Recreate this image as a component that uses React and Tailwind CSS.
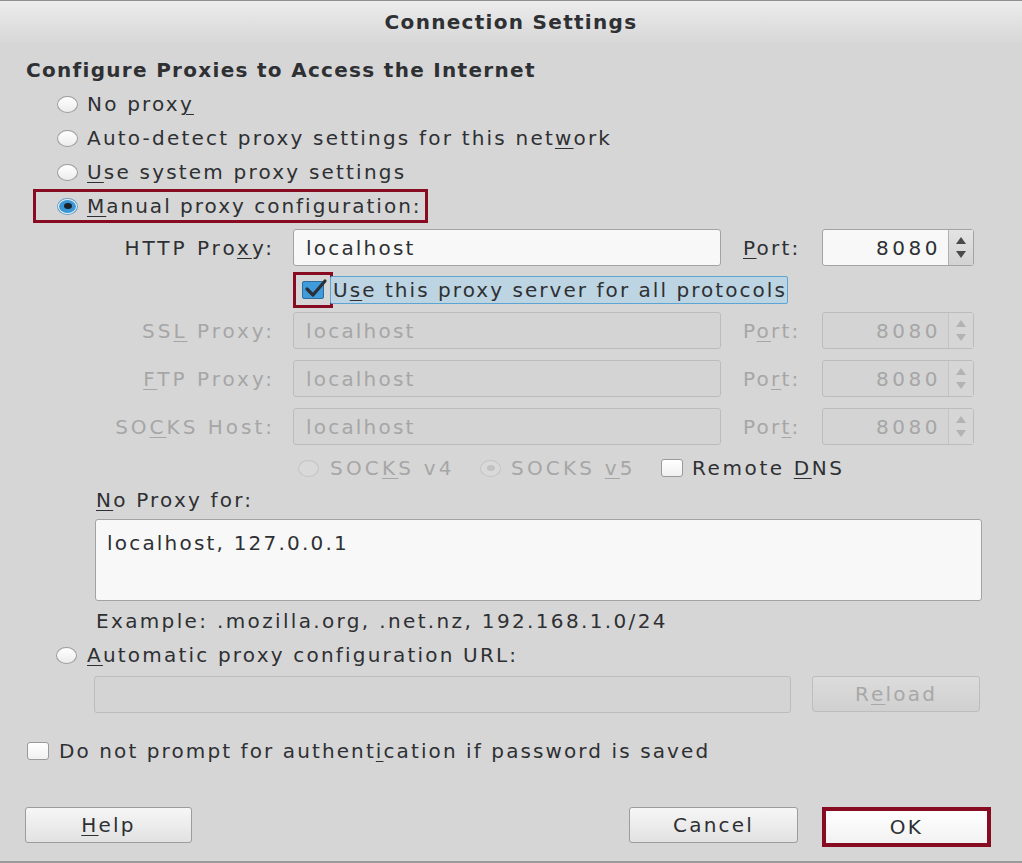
import React from "react";

const U = ({ children }) => (
  <span className="underline decoration-1 underline-offset-[3px]">{children}</span>
);

function Radio({ checked = false, disabled = false, dot = false }) {
  if (checked) {
    return (
      <div className="w-[21px] h-[17px] rounded-[50%] bg-[#e9f3fa] border border-[#6a9ec3] flex items-center justify-center shrink-0">
        <div className="w-[17px] h-[13px] rounded-[50%] bg-[#3a97d6] flex items-center justify-center">
          <div className="w-[8px] h-[6px] rounded-[50%] bg-[#1b2229]" />
        </div>
      </div>
    );
  }
  return (
    <div
      className={
        "w-[21px] h-[17px] rounded-[50%] border shrink-0 flex items-center justify-center " +
        (disabled
          ? "border-[#c4c4c4] bg-[#d9d9d9]"
          : "border-[#9d9d9d] bg-linear-to-b from-[#ffffff] to-[#ececec]")
      }
    >
      {dot && <div className="w-[8px] h-[6px] rounded-[50%] bg-[#c2c2c2]" />}
    </div>
  );
}

function Checkbox({ checked = false }) {
  if (checked) {
    return (
      <div className="relative w-[22px] h-[18px] rounded-[2px] bg-[#3f9bd9] border border-[#2b6e9c] shrink-0">
        <svg
          className="absolute left-[1px] -top-[4px]"
          width="24"
          height="22"
          viewBox="0 0 24 22"
        >
          <path
            d="M3 11 L9 17 L21 3"
            fill="none"
            stroke="#2a3036"
            strokeWidth="3.2"
            strokeLinecap="round"
            strokeLinejoin="round"
          />
        </svg>
      </div>
    );
  }
  return (
    <div className="w-[22px] h-[18px] rounded-[3px] border border-[#9a9a9a] bg-linear-to-b from-[#ffffff] to-[#f0f0f0] shrink-0" />
  );
}

function TextBox({ value, disabled = false, className = "" }) {
  return (
    <div
      className={
        "h-[37px] rounded-[3px] border flex items-center pl-[12px] whitespace-nowrap " +
        (disabled
          ? "bg-[#d4d4d4] border-[#bcbcbc] text-[#a6a6a6]"
          : "bg-[#f8f8f8] border-[#a3a3a3] text-[#2e3033]") +
        " " +
        className
      }
    >
      {value}
    </div>
  );
}

function Spin({ disabled = false }) {
  const c = disabled ? "#b3b3b3" : "#4a4a4a";
  return (
    <div
      className={
        "w-[152px] h-[37px] rounded-[3px] border flex " +
        (disabled ? "border-[#bcbcbc] bg-[#d4d4d4]" : "border-[#a3a3a3] bg-[#f8f8f8]")
      }
    >
      <div
        className={
          "flex-1 flex items-center justify-end pr-[7px] tracking-[3.5px] " +
          (disabled ? "text-[#a6a6a6]" : "text-[#2e3033]")
        }
      >
        8080
      </div>
      <div
        className={
          "w-[25px] border-l flex flex-col items-center justify-center gap-[7px] " +
          (disabled
            ? "border-[#c4c4c4] bg-[#d6d6d6]"
            : "border-[#b0b0b0] bg-linear-to-b from-[#e4e4e4] to-[#d2d2d2]")
        }
      >
        <svg width="10" height="7" viewBox="0 0 10 7">
          <path d="M5 0 L10 7 L0 7 Z" fill={c} />
        </svg>
        <svg width="10" height="7" viewBox="0 0 10 7">
          <path d="M0 0 L10 0 L5 7 Z" fill={c} />
        </svg>
      </div>
    </div>
  );
}

function ProxyRow({ label, disabled, portLabel, className = "" }) {
  return (
    <div className={"flex items-center h-[37px] " + className}>
      <div
        className={
          "w-[275px] -ml-[26px] whitespace-nowrap text-right -mr-[3px] shrink-0 tracking-[3px] " +
          (disabled ? "text-[#a6a6a6]" : "text-[#2e3033]")
        }
      >
        {label}
      </div>
      <TextBox value="localhost" disabled={disabled} className="ml-[21px] w-[428px] shrink-0" />
      <div
        className={
          "ml-[22px] w-[79px] whitespace-nowrap shrink-0 " +
          (disabled ? "text-[#a6a6a6]" : "text-[#2e3033]")
        }
      >
        {portLabel}
      </div>
      <Spin disabled={disabled} />
    </div>
  );
}

function Button({ children, className = "", disabled = false }) {
  return (
    <div
      className={
        "h-[36px] rounded-[3px] border flex items-center justify-center " +
        (disabled
          ? "border-[#bdbdbd] bg-linear-to-b from-[#dcdcdc] to-[#d0d0d0] text-[#a8a8a8]"
          : "border-[#9c9c9c] bg-linear-to-b from-[#f6f6f6] to-[#e2e2e2] text-[#2e3033]") +
        " " +
        className
      }
    >
      {children}
    </div>
  );
}

export default function App() {
  return (
    <div className="w-[1022px] h-[863px] bg-[#d6d6d6] border-t border-[#8f8f8f] flex flex-col font-['DejaVu_Sans',sans-serif] text-[20px] tracking-[2.2px] text-[#2e3033] overflow-hidden">
      <div className="h-[42px] shrink-0 bg-linear-to-b from-[#ececec] to-[#d7d7d7] flex items-center justify-center font-bold tracking-[1.3px]">
        Connection Settings
      </div>

      <div className="flex flex-col pl-[26px] pt-[10px]">
        <div className="h-[34px] flex items-center font-bold tracking-[1.3px]">
          Configure Proxies to Access the Internet
        </div>

        <div className="h-[34px] flex items-center pl-[31px] gap-[9px]">
          <Radio />
          <span>
            No prox<U>y</U>
          </span>
        </div>
        <div className="h-[34px] flex items-center pl-[31px] gap-[9px]">
          <Radio />
          <span>
            Auto-detect proxy settings for this net<U>w</U>ork
          </span>
        </div>
        <div className="h-[34px] flex items-center pl-[31px] gap-[9px]">
          <Radio />
          <span>
            <U>U</U>se system proxy settings
          </span>
        </div>
        <div className="ml-[7px] w-[395px] h-[34px] border-[3px] border-[#870b21] flex items-center pl-[21px] gap-[9px] whitespace-nowrap">
          <Radio checked />
          <span className="tracking-[2px]">
            <U>M</U>anual proxy configuration:
          </span>
        </div>

        <ProxyRow
          className="mt-[6px]"
          label={
            <>
              HTTP Pro<U>x</U>y:
            </>
          }
          portLabel={
            <>
              <U>P</U>ort:
            </>
          }
        />

        <div className="mt-[6px] h-[36px] flex items-center pl-[267px]">
          <div className="w-[40px] h-[36px] border-[3px] border-[#870b21] flex items-center justify-center shrink-0">
            <Checkbox checked />
          </div>
          <div className="-ml-[3px] h-[28px] w-[458px] flex items-center pl-[2px] bg-[#bdd4e2] border border-[#5ea4d3] rounded-[2px] whitespace-nowrap tracking-[2.05px]">
            U<U>s</U>e this proxy server for all protocols
          </div>
        </div>

        <ProxyRow
          className="mt-[4px]"
          disabled
          label={
            <>
              SS<U>L</U> Proxy:
            </>
          }
          portLabel={
            <>
              P<U>o</U>rt:
            </>
          }
        />
        <ProxyRow
          className="mt-[11px]"
          disabled
          label={
            <>
              <U>F</U>TP Proxy:
            </>
          }
          portLabel={
            <>
              Po<U>r</U>t:
            </>
          }
        />
        <ProxyRow
          className="mt-[11px]"
          disabled
          label={
            <>
              SO<U>C</U>KS Host:
            </>
          }
          portLabel={
            <>
              Por<U>t</U>:
            </>
          }
        />

        <div className="mt-[5px] h-[36px] flex items-center pl-[272px] whitespace-nowrap">
          <Radio disabled />
          <span className="ml-[11px] w-[150px] text-[#a6a6a6] tracking-[3.2px]">
            SOC<U>K</U>S v4
          </span>
          <Radio disabled dot />
          <span className="ml-[10px] w-[150px] text-[#a6a6a6] tracking-[3.2px]">
            SOCKS <U>v</U>5
          </span>
          <Checkbox />
          <span className="ml-[9px] tracking-[2.6px]">
            Remote <U>D</U>NS
          </span>
        </div>

        <div className="h-[28px] flex items-center pl-[70px]">
          <span>
            <U>N</U>o Proxy for:
          </span>
        </div>
        <div className="mt-[5px] ml-[69px] w-[887px] h-[82px] rounded-[3px] border border-[#a3a3a3] bg-[#f8f8f8] pl-[11px] pt-[8px]">
          localhost, 127.0.0.1
        </div>
        <div className="h-[40px] flex items-center pl-[70px] whitespace-nowrap tracking-[2.35px]">
          Example: .mozilla.org, .net.nz, 192.168.1.0/24
        </div>
        <div className="h-[28px] flex items-center pl-[30px] gap-[10px]">
          <Radio />
          <span>
            <U>A</U>utomatic proxy configuration URL:
          </span>
        </div>
        <div className="mt-[7px] flex items-start">
          <TextBox value="" disabled className="ml-[68px] w-[697px]" />
          <Button disabled className="ml-[21px] w-[168px] h-[35px]">
            R<U>e</U>load
          </Button>
        </div>

        <div className="mt-[20px] h-[36px] flex items-center pl-[1px] gap-[10px] whitespace-nowrap">
          <Checkbox />
          <span className="tracking-[2.1px]">
            Do not prompt for authent<U>i</U>cation if password is saved
          </span>
        </div>

        <div className="mt-[38px] flex items-start pr-[31px]">
          <Button className="-ml-[1px] w-[167px]">
            <U>H</U>elp
          </Button>
          <Button className="ml-auto w-[169px]">Cancel</Button>
          <div className="ml-[24px] w-[169px] h-[40px] border-[4px] border-[#870b21] flex">
            <div className="flex-1 bg-linear-to-b from-[#ffffff] to-[#f2f2f2] flex items-center justify-center">
              OK
            </div>
          </div>
        </div>
      </div>
      <div className="mt-auto h-[2px] bg-[#9a9a9a]" />
    </div>
  );
}
